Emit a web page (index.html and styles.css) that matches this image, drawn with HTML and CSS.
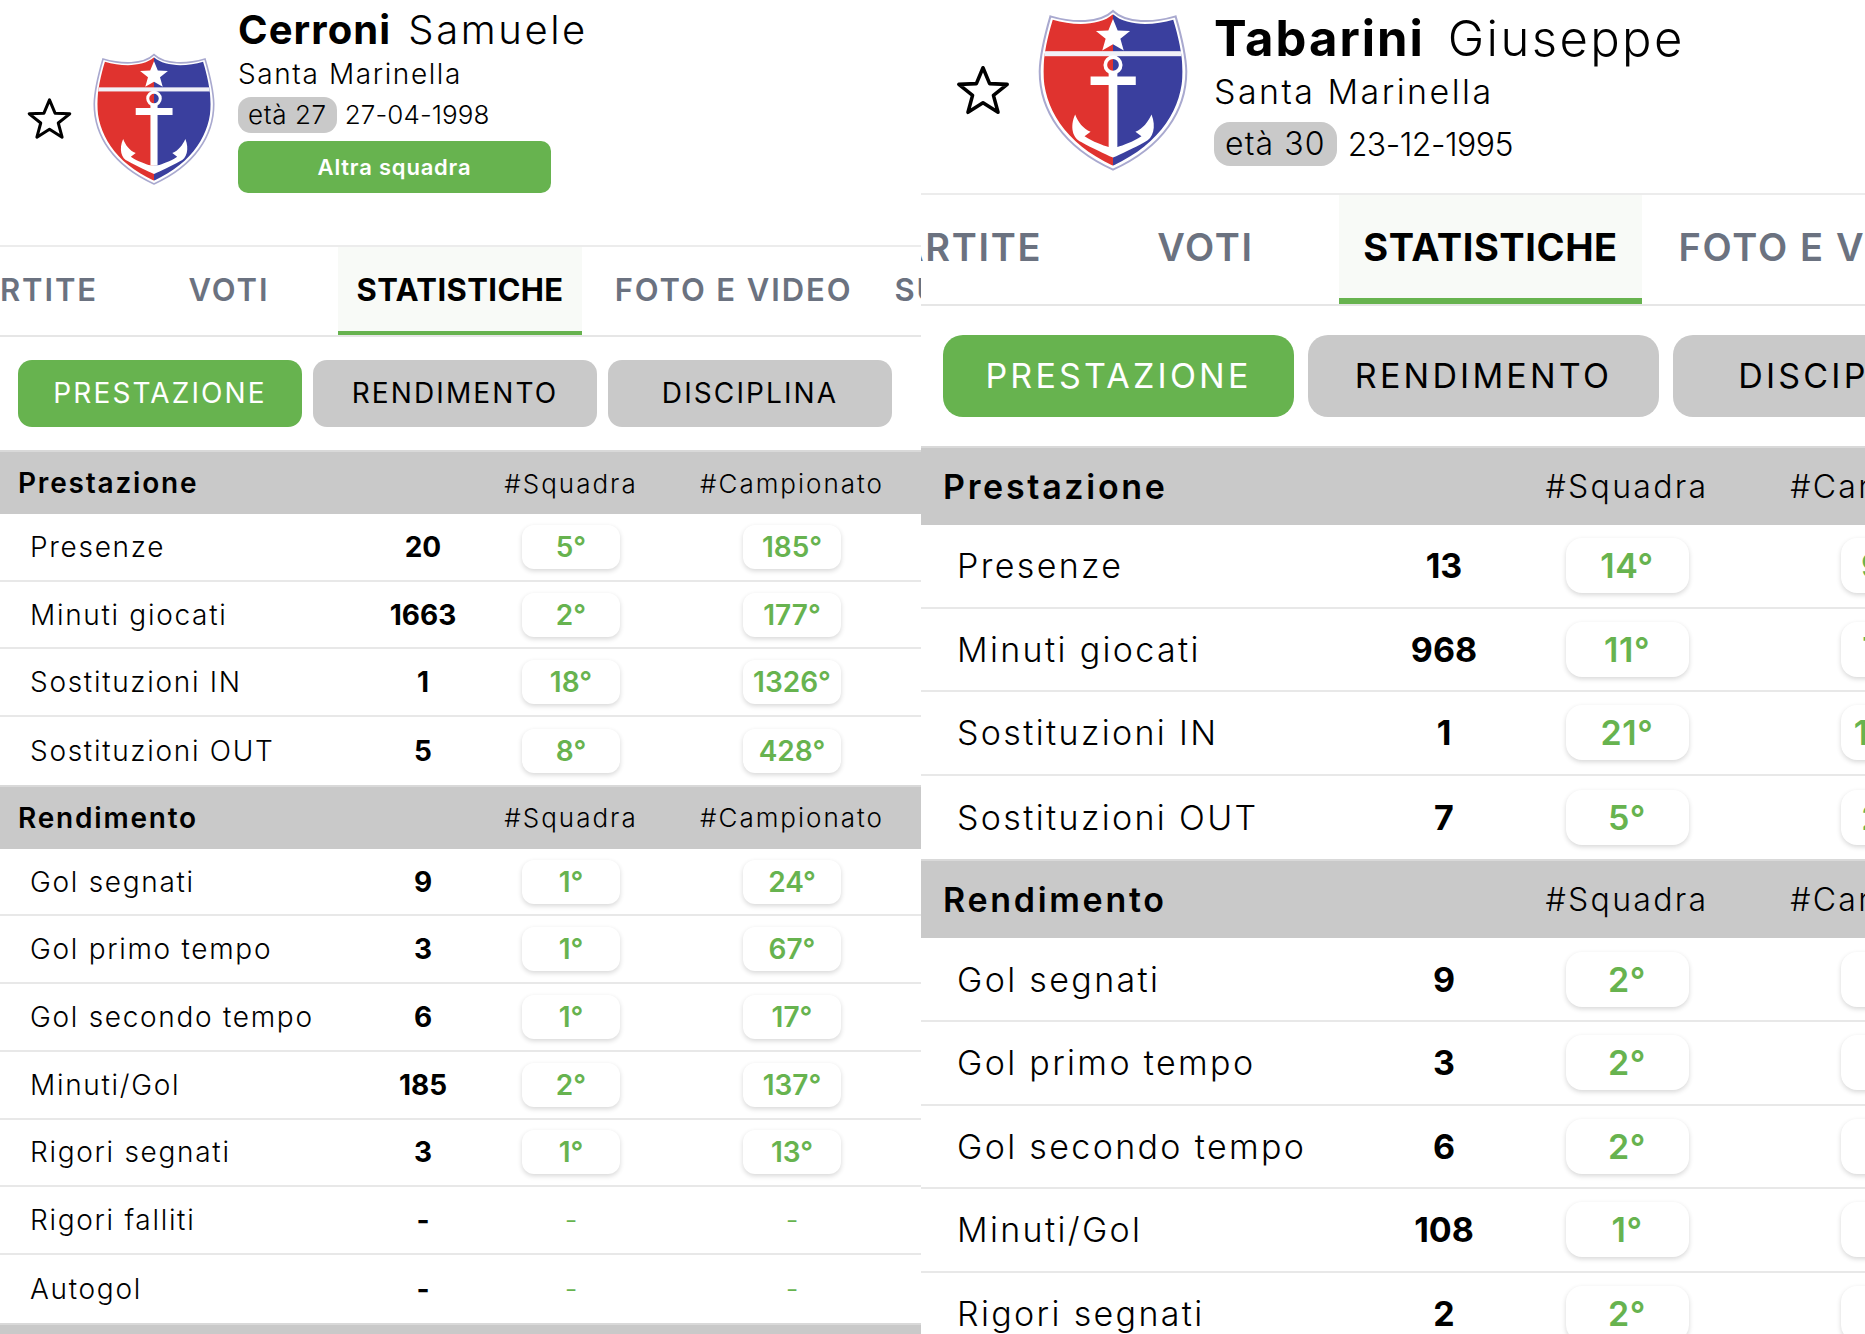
FILE: index.html
```html
<!DOCTYPE html>
<html lang="it">
<head>
<meta charset="utf-8">
<title>Statistiche giocatori</title>
<link rel="stylesheet" href="styles.css">
</head>
<body>
<svg class="defs" width="0" height="0" aria-hidden="true">
  <defs>
    <clipPath id="shield-clip"><path d="M335 44C295 80 215 78 155 60C140 110 128 160 127 215C127 320 190 430 335 496C480 430 543 320 543 215C542 160 530 110 515 60C455 78 375 80 335 44Z"/></clipPath>
    <symbol id="shield" viewBox="108 28 454 484">
      <path d="M335 34C295 72 215 70 148 50C132 105 117 160 116 215C116 330 185 440 335 508C485 440 554 330 554 215C553 160 538 105 522 50C455 70 375 72 335 34Z" fill="#fff" stroke="#a9a9cf" stroke-width="6"/>
      <g clip-path="url(#shield-clip)">
        <rect x="100" y="30" width="235" height="480" fill="#e0332f"/>
        <rect x="335" y="30" width="235" height="480" fill="#3a3f9e"/>
        <rect x="100" y="154" width="470" height="15" fill="#f1f1f7"/>
      </g>
      <polygon points="335,58 349,92 386,94 357,117 367,152 335,133 303,152 313,117 284,94 321,92" fill="#fff"/>
      <circle cx="335" cy="195" r="23" fill="none" stroke="#fff" stroke-width="11"/>
      <path d="M322 215H348V230H403V255H348V440H322V255H268V230H322Z" fill="#fff"/>
      <path d="M222 343C205 380 215 415 240 425C275 445 310 460 335 472C360 460 395 445 430 425C455 415 465 380 450 343C440 365 425 385 402 395L420 408C395 425 365 435 348 440H322C305 435 275 425 250 408L268 395C245 385 230 365 222 343Z" fill="#fff"/>
    </symbol>
    <symbol id="star" viewBox="0 0 44 40">
      <polygon points="22,2.5 27.2,15 41,15.6 30.2,24.2 33.8,37.5 22,30 10.2,37.5 13.8,24.2 3,15.6 16.8,15" fill="none" stroke="#000" stroke-width="2.8" stroke-linejoin="round"/>
    </symbol>
  </defs>
</svg>

<main class="screens">
  <section class="panel panel-a">
    <header class="head">
      <svg class="star"><use href="#star"/></svg>
      <svg class="crest"><use href="#shield"/></svg>
      <div class="info">
        <h1 class="name"><b>Cerroni</b> <span>Samuele</span></h1>
        <p class="city">Santa Marinella</p>
        <p class="age"><span class="age-pill">età 27</span> <span class="birth">27-04-1998</span></p>
        <a class="other-team">Altra squadra</a>
      </div>
    </header>
    <nav class="tabs">
      <div class="tab-track">
        <a class="tab tab-partite">PARTITE</a>
        <a class="tab tab-voti">VOTI</a>
        <a class="tab tab-stat active">STATISTICHE</a>
        <a class="tab tab-foto">FOTO E VIDEO</a>
        <a class="tab tab-su">SUSPENSIONI</a>
      </div>
    </nav>
    <div class="subnav">
      <a class="sub on">PRESTAZIONE</a><a class="sub">RENDIMENTO</a><a class="sub">DISCIPLINA</a>
    </div>
    <div class="table">
      <div class="row title"><span>Prestazione</span><span></span><span class="c">#Squadra</span><span class="c">#Campionato</span></div>
      <div class="row"><span class="l">Presenze</span><b>20</b><span class="c"><i>5°</i></span><span class="c"><i>185°</i></span></div>
      <div class="row"><span class="l">Minuti giocati</span><b>1663</b><span class="c"><i>2°</i></span><span class="c"><i>177°</i></span></div>
      <div class="row"><span class="l">Sostituzioni IN</span><b>1</b><span class="c"><i>18°</i></span><span class="c"><i>1326°</i></span></div>
      <div class="row end"><span class="l">Sostituzioni OUT</span><b>5</b><span class="c"><i>8°</i></span><span class="c"><i>428°</i></span></div>
      <div class="row title"><span>Rendimento</span><span></span><span class="c">#Squadra</span><span class="c">#Campionato</span></div>
      <div class="row"><span class="l">Gol segnati</span><b>9</b><span class="c"><i>1°</i></span><span class="c"><i>24°</i></span></div>
      <div class="row"><span class="l">Gol primo tempo</span><b>3</b><span class="c"><i>1°</i></span><span class="c"><i>67°</i></span></div>
      <div class="row"><span class="l">Gol secondo tempo</span><b>6</b><span class="c"><i>1°</i></span><span class="c"><i>17°</i></span></div>
      <div class="row"><span class="l">Minuti/Gol</span><b>185</b><span class="c"><i>2°</i></span><span class="c"><i>137°</i></span></div>
      <div class="row"><span class="l">Rigori segnati</span><b>3</b><span class="c"><i>1°</i></span><span class="c"><i>13°</i></span></div>
      <div class="row"><span class="l">Rigori falliti</span><b>-</b><span class="c dash">-</span><span class="c dash">-</span></div>
      <div class="row end"><span class="l">Autogol</span><b>-</b><span class="c dash">-</span><span class="c dash">-</span></div>
      <div class="row title"></div>
    </div>
  </section>

  <section class="panel panel-b">
    <header class="head">
      <svg class="star"><use href="#star"/></svg>
      <svg class="crest"><use href="#shield"/></svg>
      <div class="info">
        <h1 class="name"><b>Tabarini</b> <span>Giuseppe</span></h1>
        <p class="city">Santa Marinella</p>
        <p class="age"><span class="age-pill">età 30</span> <span class="birth">23-12-1995</span></p>
      </div>
    </header>
    <nav class="tabs">
      <div class="tab-track">
        <a class="tab tab-partite">PARTITE</a>
        <a class="tab tab-voti">VOTI</a>
        <a class="tab tab-stat active">STATISTICHE</a>
        <a class="tab tab-foto">FOTO E VIDEO</a>
        <a class="tab tab-su">SUSPENSIONI</a>
      </div>
    </nav>
    <div class="subnav">
      <a class="sub on">PRESTAZIONE</a><a class="sub">RENDIMENTO</a><a class="sub">DISCIPLINA</a>
    </div>
    <div class="table">
      <div class="row title"><span>Prestazione</span><span></span><span class="c">#Squadra</span><span class="c">#Campionato</span></div>
      <div class="row"><span class="l">Presenze</span><b>13</b><span class="c"><i>14°</i></span><span class="c"><i>968°</i></span></div>
      <div class="row"><span class="l">Minuti giocati</span><b>968</b><span class="c"><i>11°</i></span><span class="c"><i>788°</i></span></div>
      <div class="row"><span class="l">Sostituzioni IN</span><b>1</b><span class="c"><i>21°</i></span><span class="c"><i>1326°</i></span></div>
      <div class="row end"><span class="l">Sostituzioni OUT</span><b>7</b><span class="c"><i>5°</i></span><span class="c"><i>288°</i></span></div>
      <div class="row title"><span>Rendimento</span><span></span><span class="c">#Squadra</span><span class="c">#Campionato</span></div>
      <div class="row"><span class="l">Gol segnati</span><b>9</b><span class="c"><i>2°</i></span><span class="c"><i>24°</i></span></div>
      <div class="row"><span class="l">Gol primo tempo</span><b>3</b><span class="c"><i>2°</i></span><span class="c"><i>67°</i></span></div>
      <div class="row"><span class="l">Gol secondo tempo</span><b>6</b><span class="c"><i>2°</i></span><span class="c"><i>17°</i></span></div>
      <div class="row"><span class="l">Minuti/Gol</span><b>108</b><span class="c"><i>1°</i></span><span class="c"><i>45°</i></span></div>
      <div class="row"><span class="l">Rigori segnati</span><b>2</b><span class="c"><i>2°</i></span><span class="c"><i>32°</i></span></div>
    </div>
  </section>
</main>
</body>
</html>
```
FILE: styles.css
```css
* { box-sizing: border-box; margin: 0; padding: 0; }
html, body { height: 100%; overflow: hidden; background: #fff; }
body { font-family: Inter, "Liberation Sans", sans-serif; color: #000; }
.defs { position: absolute; }
.screens { display: flex; height: 1334px; }
.panel { height: 1334px; overflow: hidden; flex: none; }

.panel-a {
  width: 921px;
  --head-h: 245px; --star-l: 26px; --star-w: 47px; --star-h: 43px; --star-t: 97px;
  --crest-l: 19px; --crest-w: 124px; --crest-h: 132px; --crest-t: 53px; --info-l: 22px; --info-t: 6px;
  --name: 40px; --name-lh: 48px; --name-gap: 17px; --name-b-ls: 1.1px; --name-s-ls: 2.6px;
  --city: 28px; --city-lh: 36px; --city-t: 2px; --city-ls: 1.6px;
  --age-t: 4.5px; --age-h: 36px; --age-pad: 10px; --age-r: 13px; --age-gap: 8px; --age: 26px; --age-ls: .6px; --birth-ls: .1px;
  --tabs-h: 92px; --tab: 31px; --under: 4px; --track: -66px;
  --w-partite: 186px; --w-voti: 218px; --w-stat: 244px; --w-foto: 303px; --w-su: 250px; --tab-ls: 1.9px; --tab-on-ls: .4px;
  --sub-t: 23px; --sub-h: 67px; --sub-w: 284px; --sub-gap: 11px; --sub-l: 18px; --sub-r: 14px; --sub-f: 28px; --sub-b: 23px; --sub-ls: 2.1px;
  --table-w: 921px; --pad-l: 18px; --pad-r: 17px; --cols: 1fr 78px 178px 224px; --gap: 20px;
  --title-h: 64px; --row-h: 67.7px; --label-i: 12px; --f: 28px; --f-b: 28px; --f-h: 26px; --h-ls: 2px; --h-b-ls: 1.8px;
  --pill-w: 98px; --pill-h: 44px; --pill-r: 12px; --pill-f: 28px; --pill-ls: 0px; --label-ls: 1.7px;
}
.panel-b {
  width: 944px;
  --head-h: 193px; --star-l: 34px; --star-w: 56px; --star-h: 52px; --star-t: 64px;
  --crest-l: 26px; --crest-w: 152px; --crest-h: 162px; --crest-t: 9px; --info-l: 25px; --info-t: 10px;
  --name: 49px; --name-lh: 58px; --name-gap: 23px; --name-b-ls: 2px; --name-s-ls: 2.4px;
  --city: 34px; --city-lh: 44px; --city-t: 2px; --city-ls: 2.45px;
  --age-t: 8px; --age-h: 44px; --age-pad: 11px; --age-r: 16px; --age-gap: 11px; --age: 32px; --age-ls: 1.1px; --birth-ls: -.5px;
  --tabs-h: 113px; --tab: 38px; --under: 6px; --track: -78px;
  --w-partite: 229px; --w-voti: 267px; --w-stat: 303px; --w-foto: 357px; --w-su: 300px; --tab-ls: 1.7px; --tab-on-ls: .55px;
  --sub-t: 29px; --sub-h: 82px; --sub-w: 351px; --sub-gap: 14px; --sub-l: 22px; --sub-r: 20px; --sub-f: 34px; --sub-b: 29px; --sub-ls: 3.2px;
  --table-w: 1120px; --pad-l: 22px; --pad-r: 0px; --cols: 430px 92px 224px 277px; --gap: 25px;
  --title-h: 79px; --row-h: 83.6px; --label-i: 14px; --f: 34px; --f-b: 34px; --f-h: 32px; --h-ls: 2.3px; --h-b-ls: 2.7px;
  --pill-w: 123px; --pill-h: 55px; --pill-r: 16px; --pill-f: 34px; --pill-ls: .6px; --label-ls: 2.35px;
}

.head { height: var(--head-h); display: flex; align-items: flex-start; }
.star { width: var(--star-w); height: var(--star-h); margin: var(--star-t) 0 0 var(--star-l); flex: none; }
.crest { width: var(--crest-w); height: var(--crest-h); margin: var(--crest-t) 0 0 var(--crest-l); flex: none; }
.info { margin: var(--info-t) 0 0 var(--info-l); }
.name { display: flex; gap: var(--name-gap); font-size: var(--name); line-height: var(--name-lh); font-weight: 300; }
.name b { font-weight: 700; letter-spacing: var(--name-b-ls); }
.name span { letter-spacing: var(--name-s-ls); }
.city { margin-top: var(--city-t); font-size: var(--city); line-height: var(--city-lh); font-weight: 300; letter-spacing: var(--city-ls); }
.age { margin-top: var(--age-t); display: flex; align-items: center; gap: var(--age-gap); font-size: var(--age); font-weight: 300; height: var(--age-h); }
.age-pill { background: #c9c9c9; border-radius: var(--age-r); padding: 0 var(--age-pad); height: var(--age-h); line-height: var(--age-h); letter-spacing: var(--age-ls); }
.birth { letter-spacing: var(--birth-ls); }
.other-team { display: block; margin-top: 8px; width: 313px; height: 52px; border-radius: 10px; background: #67b34f; color: #fff; text-align: center; font-size: 22px; line-height: 52px; font-weight: 600; letter-spacing: .8px; }

.tabs { height: var(--tabs-h); border-top: 2px solid #ececec; border-bottom: 2px solid #e6e6e6; overflow: hidden; }
.tab-track { display: flex; margin-left: var(--track); height: 100%; width: 1500px; }
.tab { flex: none; display: flex; align-items: center; justify-content: center; padding-bottom: var(--under); font-size: var(--tab); font-weight: 600; color: #6b7280; letter-spacing: var(--tab-ls); }
.tab-partite { width: var(--w-partite); }
.tab-voti { width: var(--w-voti); }
.tab-stat { width: var(--w-stat); }
.tab-foto { width: var(--w-foto); }
.tab-su { width: var(--w-su); }
.tab.active { color: #000; background: #f8faf7; border-bottom: var(--under) solid #67b34f; padding-bottom: 0; font-weight: 700; letter-spacing: var(--tab-on-ls); }

.subnav { display: flex; gap: var(--sub-gap); padding: var(--sub-t) 0 var(--sub-b) var(--sub-l); width: 1200px; }
.sub { flex: none; width: var(--sub-w); height: var(--sub-h); line-height: var(--sub-h); border-radius: var(--sub-r); background: #c9c9c9; text-align: center; font-size: var(--sub-f); font-weight: 400; letter-spacing: var(--sub-ls); }
.sub.on { background: #67b34f; color: #fff; }

.table { width: var(--table-w); }
.row { display: grid; grid-template-columns: var(--cols); column-gap: var(--gap); align-items: center; height: var(--row-h); padding: 0 var(--pad-r) 0 var(--pad-l); border-bottom: 2px solid #e8e8e8; font-size: var(--f); font-weight: 300; }
.row.end { border-bottom: 0; }
.row.title { height: var(--title-h); background: #c9c9c9; border-bottom: 0; border-top: 2px solid #d9d9d9; font-size: var(--f-h); letter-spacing: var(--h-ls); }
.row.title > span:first-child { font-size: var(--f-b); font-weight: 600; letter-spacing: var(--h-b-ls); }
.row .l { padding-left: var(--label-i); letter-spacing: var(--label-ls); }
.row b { text-align: center; font-size: var(--f-b); font-weight: 700; }
.row .c { text-align: center; }
.row i { display: block; width: var(--pill-w); height: var(--pill-h); line-height: var(--pill-h); margin: 0 auto; border-radius: var(--pill-r); background: #fff; box-shadow: 0 2px 5px rgba(0,0,0,.16); color: #67b34f; font-style: normal; font-weight: 600; font-size: var(--pill-f); letter-spacing: var(--pill-ls); }
.row .dash { color: #67b34f; }
```
